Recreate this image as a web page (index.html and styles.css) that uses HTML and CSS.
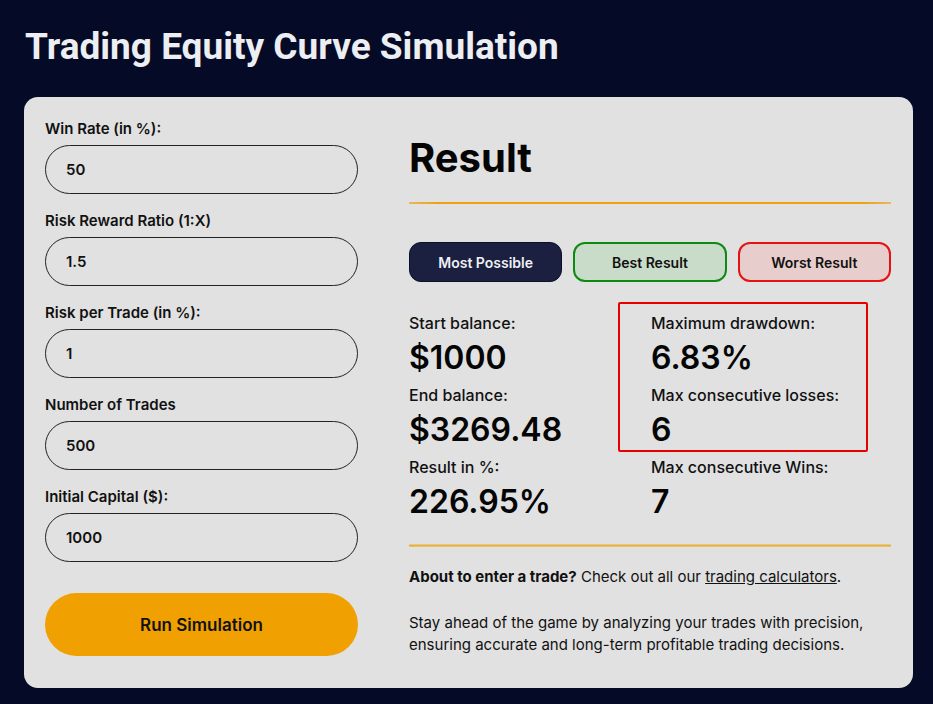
FILE: index.html
```html
<!DOCTYPE html>
<html lang="en">
<head>
<meta charset="utf-8">
<title>Trading Equity Curve Simulation</title>
<link rel="stylesheet" href="styles.css">
</head>
<body>
<div class="page">
  <h1 class="title">Trading Equity Curve Simulation</h1>
  <div class="card">
    <form class="inputs">
      <label class="field">
        <span class="field-label">Win Rate (in %):</span>
        <input class="field-input" type="text" value="50">
      </label>
      <label class="field">
        <span class="field-label">Risk Reward Ratio (1:X)</span>
        <input class="field-input" type="text" value="1.5">
      </label>
      <label class="field">
        <span class="field-label">Risk per Trade (in %):</span>
        <input class="field-input" type="text" value="1">
      </label>
      <label class="field">
        <span class="field-label">Number of Trades</span>
        <input class="field-input" type="text" value="500">
      </label>
      <label class="field">
        <span class="field-label">Initial Capital ($):</span>
        <input class="field-input" type="text" value="1000">
      </label>
      <button class="run-btn" type="button">Run Simulation</button>
    </form>
    <div class="results">
      <h2 class="result-title">Result</h2>
      <div class="rule"></div>
      <div class="tabs">
        <button class="tab tab-most" type="button">Most Possible</button>
        <button class="tab tab-best" type="button">Best Result</button>
        <button class="tab tab-worst" type="button">Worst Result</button>
      </div>
      <div class="stats">
        <div class="stat-col">
          <div class="stat"><div class="stat-label">Start balance:</div><div class="stat-value">$1000</div></div>
          <div class="stat"><div class="stat-label">End balance:</div><div class="stat-value">$3269.48</div></div>
          <div class="stat"><div class="stat-label">Result in %:</div><div class="stat-value">226.95%</div></div>
        </div>
        <div class="stat-col">
          <div class="highlight">
            <div class="stat"><div class="stat-label">Maximum drawdown:</div><div class="stat-value">6.83%</div></div>
            <div class="stat"><div class="stat-label">Max consecutive losses:</div><div class="stat-value">6</div></div>
          </div>
          <div class="stat"><div class="stat-label">Max consecutive Wins:</div><div class="stat-value">7</div></div>
        </div>
      </div>
      <div class="rule rule-soft"></div>
      <p class="note"><strong>About to enter a trade?</strong> Check out all our <a href="#" class="link">trading calculators</a>.</p>
      <p class="desc">Stay ahead of the game by analyzing your trades with precision, ensuring accurate and long-term profitable trading decisions.</p>
    </div>
  </div>
</div>
</body>
</html>
```
FILE: styles.css
```css
*, *::before, *::after { box-sizing: border-box; }
html, body { margin: 0; padding: 0; }
body {
  background: #050a26;
  font-family: Inter, "Noto Sans", sans-serif;
  color: #111;
}
.page {
  padding: 26px 20px 0 24px;
}
.title {
  margin: 0 0 29px 1px;
  font-family: Roboto, "Liberation Sans", sans-serif;
  font-weight: 700;
  font-size: 37px;
  line-height: 42px;
  color: #eceef2;
}
.card {
  background: #e1e1e1;
  border-radius: 14px;
  padding: 20px 22px 32px 21px;
  display: grid;
  grid-template-columns: 313px 1fr;
  column-gap: 51px;
  align-items: start;
}
.inputs {
  display: flex;
  flex-direction: column;
  margin: 2px 0 0;
}
.field {
  display: flex;
  flex-direction: column;
  margin-bottom: 17px;
}
.field-label {
  font-size: 15px;
  line-height: 20px;
  font-weight: 600;
  margin-bottom: 6px;
  color: #111;
}
.field-input {
  height: 49px;
  border: 1px solid #222;
  border-radius: 25px;
  background: transparent;
  padding: 0 20px;
  font-family: Inter, "Noto Sans", sans-serif;
  font-size: 15px;
  font-weight: 600;
  color: #111;
  outline: none;
}
.run-btn {
  margin-top: 14px;
  height: 63px;
  border: none;
  border-radius: 32px;
  background: #f0a000;
  font-family: Inter, "Noto Sans", sans-serif;
  font-size: 17px;
  font-weight: 600;
  color: #111;
}
.results {
  display: flex;
  flex-direction: column;
}
.result-title {
  margin: 17px 0 20px;
  font-size: 40px;
  line-height: 48px;
  font-weight: 700;
  color: #050505;
}
.rule {
  height: 2px;
  background: linear-gradient(90deg, #e8b860 0%, #eea010 6%, #eea010 94%, #e8b860 100%);
}
.tabs {
  margin-top: 38px;
  display: grid;
  grid-template-columns: repeat(3, 1fr);
  column-gap: 11px;
}
.tab {
  height: 40px;
  border-radius: 12px;
  font-family: Inter, "Noto Sans", sans-serif;
  font-size: 14px;
  font-weight: 600;
  color: #111;
}
.tab-most {
  background: #1b1f40;
  border: 1px solid #0c0f2a;
  color: #eef0f4;
}
.tab-best {
  background: #c9dcc9;
  border: 2px solid #0d8a12;
}
.tab-worst {
  background: #e8cdcd;
  border: 2px solid #e41212;
}
.stats {
  margin-top: 31px;
  display: grid;
  grid-template-columns: 242px 1fr;
}
.stat-col {
  display: flex;
  flex-direction: column;
}
.highlight {
  position: relative;
}
.highlight::before {
  content: "";
  position: absolute;
  left: -33px;
  top: -11px;
  width: 250px;
  height: 150px;
  border: 2px solid #e60000;
  border-radius: 2px;
}
.stat {
  display: flex;
  flex-direction: column;
  margin-bottom: 8px;
}
.stat-label {
  font-size: 16px;
  line-height: 20px;
  font-weight: 500;
  margin-bottom: 6px;
}
.stat-value {
  font-size: 32px;
  line-height: 38px;
  font-weight: 600;
  color: #050505;
}
.rule-soft {
  margin-top: 15px;
  height: 3px;
  background: linear-gradient(180deg, #f5d48a 0%, #ddaa40 60%, #f0d290 100%);
}
.note {
  margin: 20px 0 0;
  font-size: 15px;
  line-height: 20px;
}
.note strong { font-weight: 700; }
.link { color: #111; text-decoration: underline; }
.desc {
  margin: 25px 0 0;
  font-size: 15px;
  line-height: 22px;
}
```
